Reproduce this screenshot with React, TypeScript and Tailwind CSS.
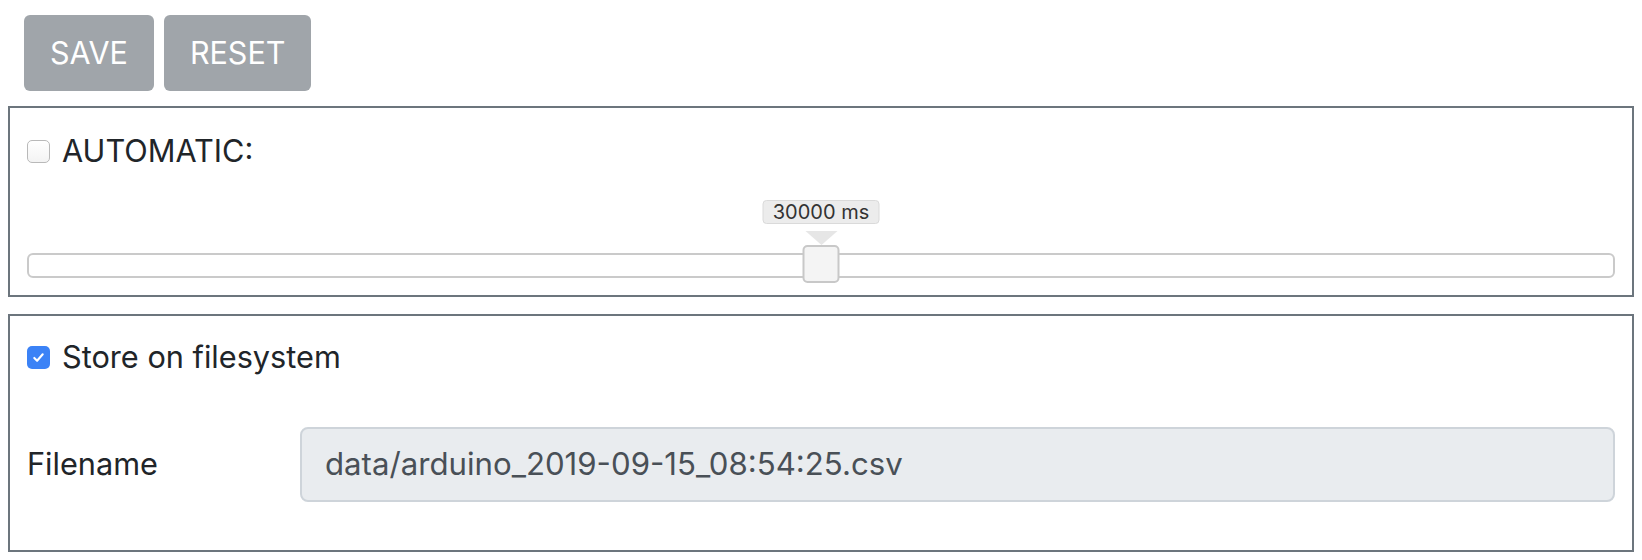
import React, { useState } from "react";

function Checkbox({ checked, onChange }: { checked: boolean; onChange: () => void }) {
  return (
    <button
      type="button"
      onClick={onChange}
      className={
        checked
          ? "w-[23px] h-[23px] rounded-[5px] bg-[#3b82f6] flex items-center justify-center shrink-0"
          : "w-[23px] h-[23px] rounded-[5px] border border-[#b9b9b9] bg-gradient-to-b from-white to-[#f3f3f3] shrink-0"
      }
    >
      {checked && (
        <svg width="15" height="15" viewBox="0 0 16 16" fill="none">
          <path d="M3.5 8.5l3 3 6-7" stroke="white" strokeWidth="2.2" strokeLinecap="round" strokeLinejoin="round" />
        </svg>
      )}
    </button>
  );
}

export default function App() {
  const [automatic, setAutomatic] = useState(false);
  const [store, setStore] = useState(true);

  return (
    <div className="p-2 bg-white min-h-screen text-[#212529]" style={{ fontFamily: "Inter, 'Liberation Sans', sans-serif" }}>
      {/* action buttons */}
      <div className="flex gap-[10px] ml-4 mt-[7px]">
        <button className="h-[76px] px-[26px] rounded-md bg-[#a0a5aa] text-white text-[30.5px]">
          SAVE
        </button>
        <button className="h-[76px] px-[26px] rounded-md bg-[#a0a5aa] text-white text-[30.5px]">
          RESET
        </button>
      </div>

      {/* automatic panel */}
      <div className="mt-[15px] border-2 border-[#6c757d] px-[17px] pt-[21px] pb-[17px]">
        <label className="flex items-center gap-[12px] h-[45px] text-[30.7px]">
          <Checkbox checked={automatic} onChange={() => setAutomatic(!automatic)} />
          <span>AUTOMATIC:</span>
        </label>

        <div className="relative mt-[79px] h-[25px] rounded-md border-2 border-[#cacaca] bg-white">
          <div className="absolute left-1/2 -translate-x-1/2 top-[-55px] flex flex-col items-center">
            <div className="h-[24px] w-[117px] rounded-[4px] bg-[#ececec] border border-[#dadada] flex items-center justify-center text-[20px] text-[#333]">
              30000 ms
            </div>
            <div className="mt-[7px] w-0 h-0 border-l-[16px] border-r-[16px] border-t-[14px] border-l-transparent border-r-transparent border-t-[#e6e6e6]" />
          </div>
          <div className="absolute left-1/2 -translate-x-1/2 top-[-10px] w-[37px] h-[38px] rounded-[5px] bg-[#f4f4f4] border-2 border-[#c8c8c8]" />
        </div>
      </div>

      {/* filesystem panel */}
      <div className="mt-[17px] border-2 border-[#6c757d] px-[17px] pt-[19px] pb-[48px]">
        <label className="flex items-center gap-[12px] h-[45px] text-[30.7px]">
          <Checkbox checked={store} onChange={() => setStore(!store)} />
          <span>Store on filesystem</span>
        </label>

        <div className="flex items-center mt-[47px]">
          <div className="w-[273px] text-[30.7px]">Filename</div>
          <div className="flex-1 h-[75px] rounded-lg bg-[#e9ecef] border-2 border-[#ced4da] flex items-center px-[23px] text-[31.2px] text-[#495057]">
            data/arduino_2019-09-15_08:54:25.csv
          </div>
        </div>
      </div>
    </div>
  );
}
